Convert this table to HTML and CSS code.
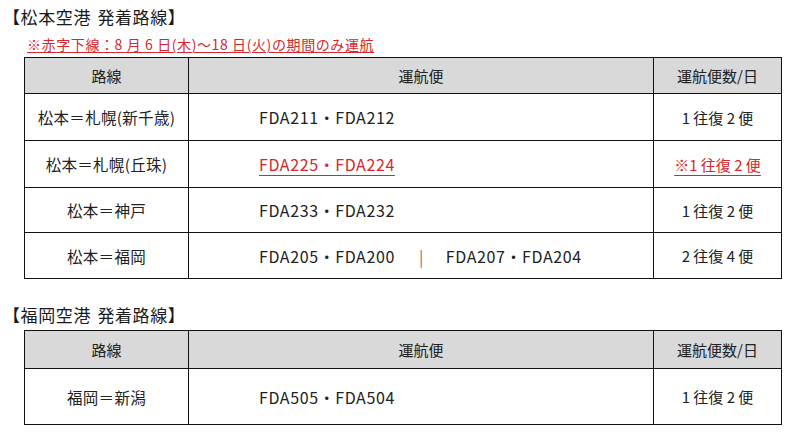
FILE: index.html
```html
<!DOCTYPE html>
<html lang="ja">
<head>
<meta charset="utf-8">
<link rel="stylesheet" href="styles.css">
</head>
<body>
<h2 class="title">【松本空港 発着路線】</h2>
<p class="note">※赤字下線：8 月 6 日(木)～18 日(火)の期間のみ運航</p>
<table class="routes">
  <colgroup><col class="c1"><col class="c2"><col class="c3"></colgroup>
  <thead>
    <tr class="h1"><th>路線</th><th>運航便</th><th>運航便数/日</th></tr>
  </thead>
  <tbody>
    <tr class="r47"><td class="route">松本＝札幌(新千歳)</td><td class="flights">FDA211・FDA212</td><td class="count">1 往復 2 便</td></tr>
    <tr class="r47"><td class="route">松本＝札幌(丘珠)</td><td class="flights"><span class="red">FDA225・FDA224</span></td><td class="count"><span class="red">※1 往復 2 便</span></td></tr>
    <tr class="r45"><td class="route">松本＝神戸</td><td class="flights">FDA233・FDA232</td><td class="count">1 往復 2 便</td></tr>
    <tr class="r46"><td class="route">松本＝福岡</td><td class="flights">FDA205・FDA200<span class="sep">|</span>FDA207・FDA204</td><td class="count">2 往復 4 便</td></tr>
  </tbody>
</table>
<h2 class="title title2">【福岡空港 発着路線】</h2>
<table class="routes routes2">
  <colgroup><col class="c1"><col class="c2"><col class="c3"></colgroup>
  <thead>
    <tr class="h2"><th>路線</th><th>運航便</th><th>運航便数/日</th></tr>
  </thead>
  <tbody>
    <tr class="r56"><td class="route">福岡＝新潟</td><td class="flights">FDA505・FDA504</td><td class="count">1 往復 2 便</td></tr>
  </tbody>
</table>
</body>
</html>
```

FILE: styles.css
```css
html, body {
  margin: 0;
  padding: 0;
  background: #fff;
}
body {
  font-family: "Noto Sans CJK JP", "Noto Sans", sans-serif;
  color: #222;
  width: 800px;
  height: 436px;
  overflow: hidden;
}
.title {
  margin: 0;
  padding: 5px 0 0 3px;
  font-size: 17px;
  font-weight: 400;
  line-height: 24px;
  letter-spacing: 0.6px;
  word-spacing: 2px;
  color: #1a1a1a;
}
.title2 {
  padding-top: 0;
  margin-top: 24px;
}
.note {
  margin: 0;
  padding: 5px 0 0 27px;
  font-size: 14px;
  line-height: 20px;
  letter-spacing: 0.6px;
  color: #d8262c;
  text-decoration: underline;
  text-underline-offset: 2px;
  text-decoration-thickness: 1px;
}
.routes {
  border-collapse: collapse;
  table-layout: fixed;
  width: 757px;
  margin: 3px 0 0 24px;
}
.routes2 {
  margin-top: 3px;
}
.c1 { width: 164px; }
.c2 { width: 465px; }
.c3 { width: 128px; }
.routes th, .routes td {
  border: 1px solid #111;
  padding: 0;
  font-size: 15px;
  font-weight: 400;
  vertical-align: middle;
  text-align: center;
  white-space: nowrap;
}
.routes th {
  background: #d9d9d9;
}
.h1 { height: 36px; }
.h2 { height: 38px; }
.r47 { height: 47px; }
.r45 { height: 45px; }
.r46 { height: 46px; }
.r56 { height: 56px; }
.routes td.route {
  font-size: 15.5px;
  letter-spacing: 0.3px;
}
.routes td.flights {
  text-align: left;
  padding-left: 70px;
  font-size: 16px;
  letter-spacing: 0.6px;
}
.sep {
  display: inline-block;
  margin: 0 22px 0 24px;
  color: #777;
}
.red {
  color: #d8262c;
  text-decoration: underline;
  text-underline-offset: 4px;
  text-decoration-thickness: 1px;
}
```
